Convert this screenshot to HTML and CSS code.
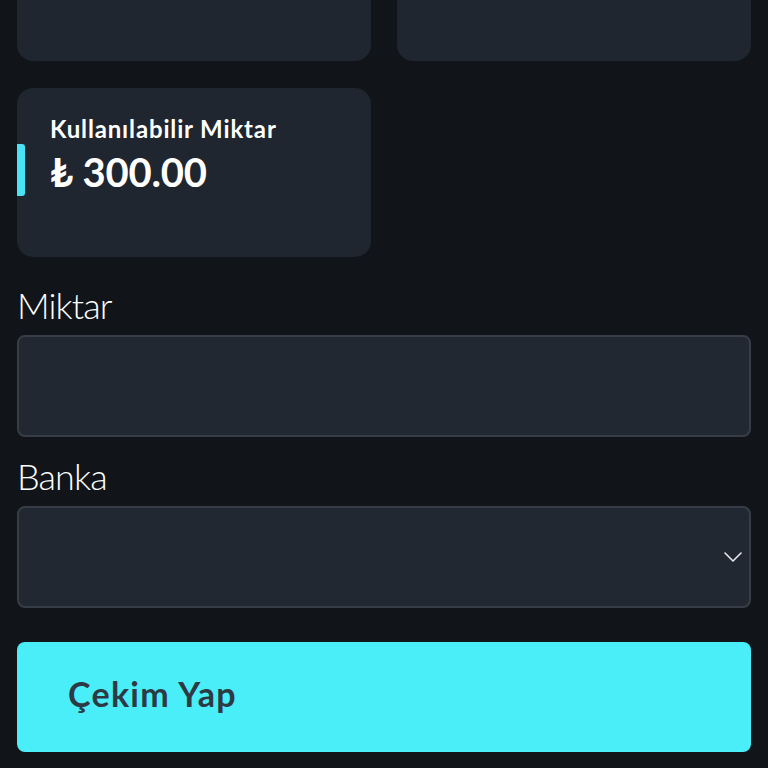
FILE: index.html
```html
<!DOCTYPE html>
<html lang="tr">
<head>
<meta charset="utf-8">
<link rel="stylesheet" href="styles.css">
</head>
<body>
<div class="page">
  <div class="cards">
    <div class="card"></div>
    <div class="card"></div>
    <div class="card balance">
      <span class="accent"></span>
      <div class="balance-title">Kullanılabilir Miktar</div>
      <div class="balance-amount">₺ 300.00</div>
    </div>
  </div>
  <div class="field">
    <label class="label">Miktar</label>
    <div class="input"></div>
  </div>
  <div class="field">
    <label class="label">Banka</label>
    <div class="input select">
      <svg class="chevron" width="18" height="10" viewBox="0 0 18 10"><path d="M1 1 L9 9 L17 1" fill="none" stroke="#e6e9ee" stroke-width="1.6" stroke-linecap="round" stroke-linejoin="round"/></svg>
    </div>
  </div>
  <button class="submit">Çekim Yap</button>
</div>
</body>
</html>
```
FILE: styles.css
```css
* { box-sizing: border-box; }
html, body { margin: 0; padding: 0; background: #111519; }
body { font-family: Lato, "Open Sans", sans-serif; color: #ffffff; overflow: hidden; height: 768px; }
.page { padding: 0 17px; }
.cards {
  display: grid;
  grid-template-columns: 354px 354px;
  column-gap: 26px;
  row-gap: 27px;
  margin-top: -108px;
}
.card {
  height: 169px;
  background: #1f2630;
  border-radius: 16px;
}
.balance {
  position: relative;
  padding: 27px 0 0 33px;
}
.accent {
  position: absolute;
  left: 0;
  top: 56px;
  width: 8px;
  height: 52px;
  background: #4ae3f5;
  border-radius: 0 3px 3px 0;
}
.balance-title {
  font-size: 24px;
  font-weight: 700;
  line-height: 28px;
  letter-spacing: 0.85px;
}
.balance-amount {
  font-size: 40px;
  font-weight: 700;
  line-height: 44px;
  margin-top: 7px;
  letter-spacing: -0.2px;
}
.label {
  display: block;
  font-size: 36px;
  font-weight: 300;
  line-height: 40px;
  letter-spacing: -0.9px;
  padding-top: 28px;
  padding-bottom: 10px;
  padding-left: 0;
}
.field + .field .label { padding-top: 19px; }
.input {
  height: 102px;
  background: #222832;
  border: 2px solid #363d47;
  border-radius: 8px;
}
.select {
  display: flex;
  align-items: center;
  justify-content: flex-end;
  padding-right: 7px;
}
.chevron { display: block; }
.submit {
  display: block;
  width: 100%;
  height: 110px;
  margin-top: 34px;
  background: #4aeef9;
  border: none;
  border-radius: 8px;
  text-align: left;
  padding: 32px 0 38px 51px;
  font-family: Lato, "Open Sans", sans-serif;
  font-size: 34px;
  line-height: 40px;
  font-weight: 700;
  letter-spacing: 1.3px;
  color: #2d3a44;
}
```
